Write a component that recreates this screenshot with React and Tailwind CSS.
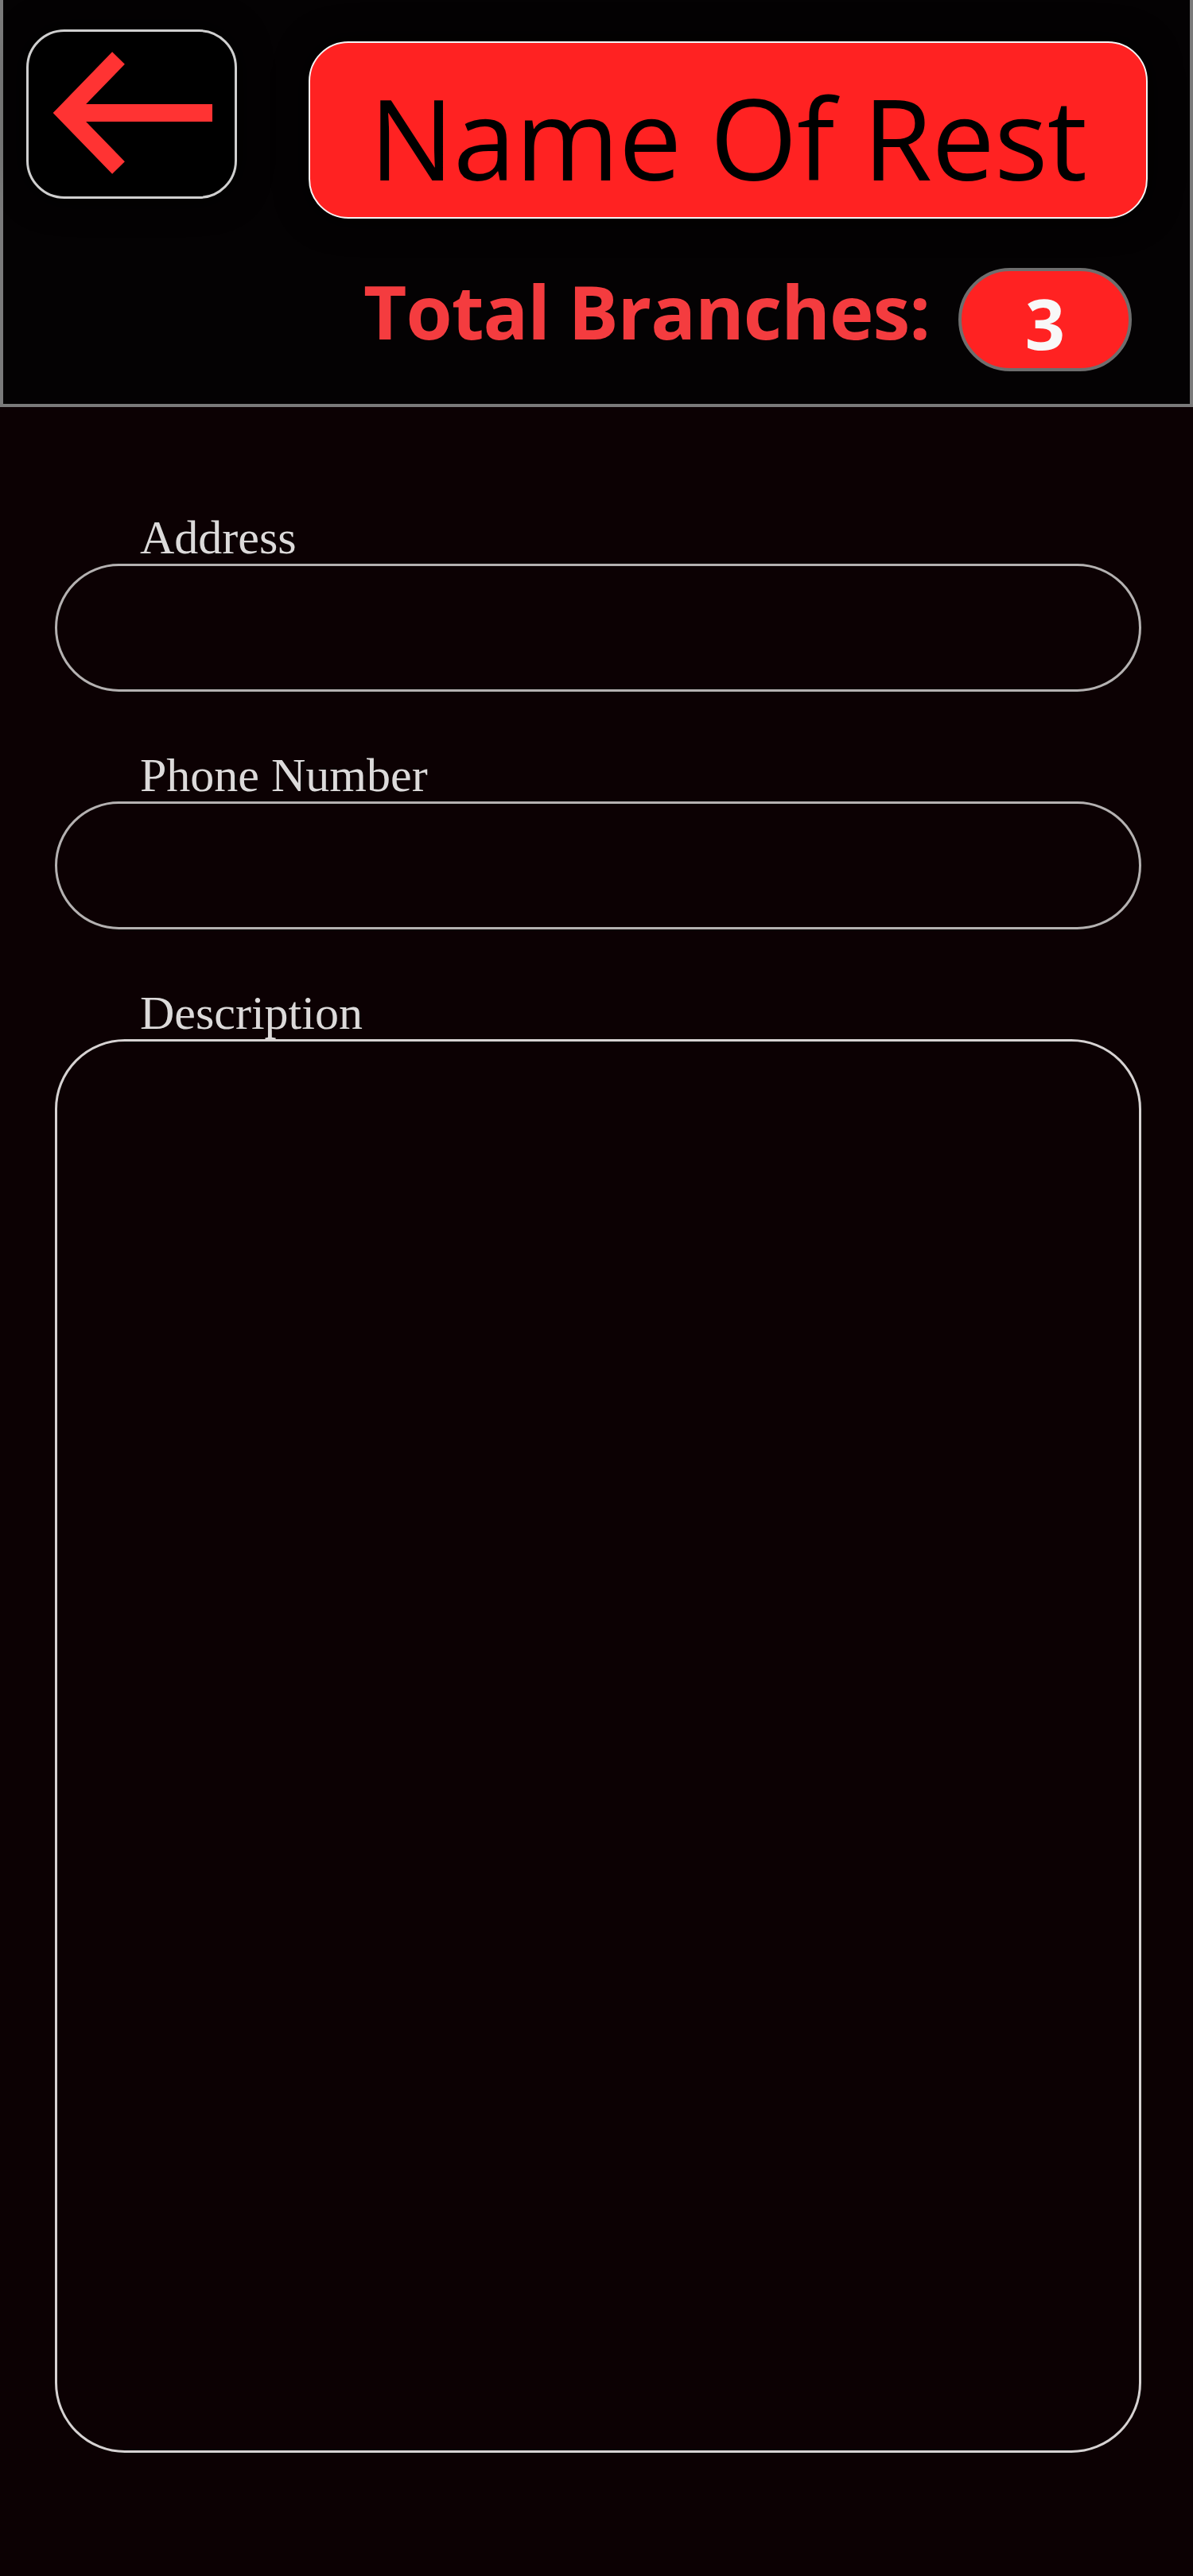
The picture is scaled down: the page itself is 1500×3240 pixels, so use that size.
import React from 'react';

function BackArrow() {
  return (
    <svg viewBox="0 0 259 207" className="w-full h-full" fill="none">
      <path d="M113 33 L46 102 L113 171" stroke="#ff3333" strokeWidth="22" strokeLinejoin="miter" />
      <path d="M46 102 H231" stroke="#ff3333" strokeWidth="22" />
    </svg>
  );
}

function Field({ label, tall }) {
  return (
    <div className="flex flex-col">
      <label className="ml-[107px] mb-[3px] h-[60px] text-[60px] leading-[60px] text-[#dcdada] font-['Liberation_Serif',serif]">
        {label}
      </label>
      {tall ? (
        <textarea className="h-[1778px] w-full resize-none rounded-[88px] border-[3px] border-[#d6d2d2] bg-transparent outline-none" />
      ) : (
        <input className="h-[161px] w-full rounded-full border-[3px] border-[#b4b1b1] bg-transparent outline-none" />
      )}
    </div>
  );
}

export default function App() {
  return (
    <div className="min-h-screen flex flex-col bg-[#0c0103]">
      {/* Header */}
      <header className="flex h-[512px] shrink-0 border-x-4 border-b-4 border-[#7a7a7a] bg-[#040203]">
        <button className="ml-[29px] mt-[37px] w-[265px] h-[213px] rounded-[48px] border-[3px] border-[#cfcfcf] bg-black shadow-[0_0_40px_rgba(0,0,0,1)]">
          <BackArrow />
        </button>

        <div className="ml-[90px] mt-[52px] flex w-[1055px] flex-col">
          <div className="flex h-[223px] items-center justify-center rounded-[50px] border-2 border-[#f4f4f4] bg-[#ff2222] pt-[17px] shadow-[0_0_40px_rgba(0,0,0,1)]">
            <h1 className="text-[141px] leading-none tracking-[-0.5px] text-black font-['Open_Sans',sans-serif]">Name Of Rest</h1>
          </div>

          <div className="mt-[62px] flex items-start justify-end pr-[20px]">
            <span className="mt-[7px] text-[94px] leading-none font-bold tracking-[-1px] text-[#f43c3f] font-['Open_Sans',sans-serif]">
              Total Branches:
            </span>
            <div className="ml-[36px] flex h-[130px] w-[218px] items-center justify-center rounded-full border-4 border-[#6e6e6e] bg-[#ff2222] pt-[8px]">
              <span className="text-[88px] leading-none font-bold text-[#f8f8f8] font-['Open_Sans',sans-serif]">3</span>
            </div>
          </div>
        </div>
      </header>

      {/* Form */}
      <main className="flex-1 flex flex-col gap-[75px] pl-[69px] pr-[65px] pt-[134px]">
        <Field label="Address" />
        <Field label="Phone Number" />
        <Field label="Description" tall />
      </main>
    </div>
  );
}
